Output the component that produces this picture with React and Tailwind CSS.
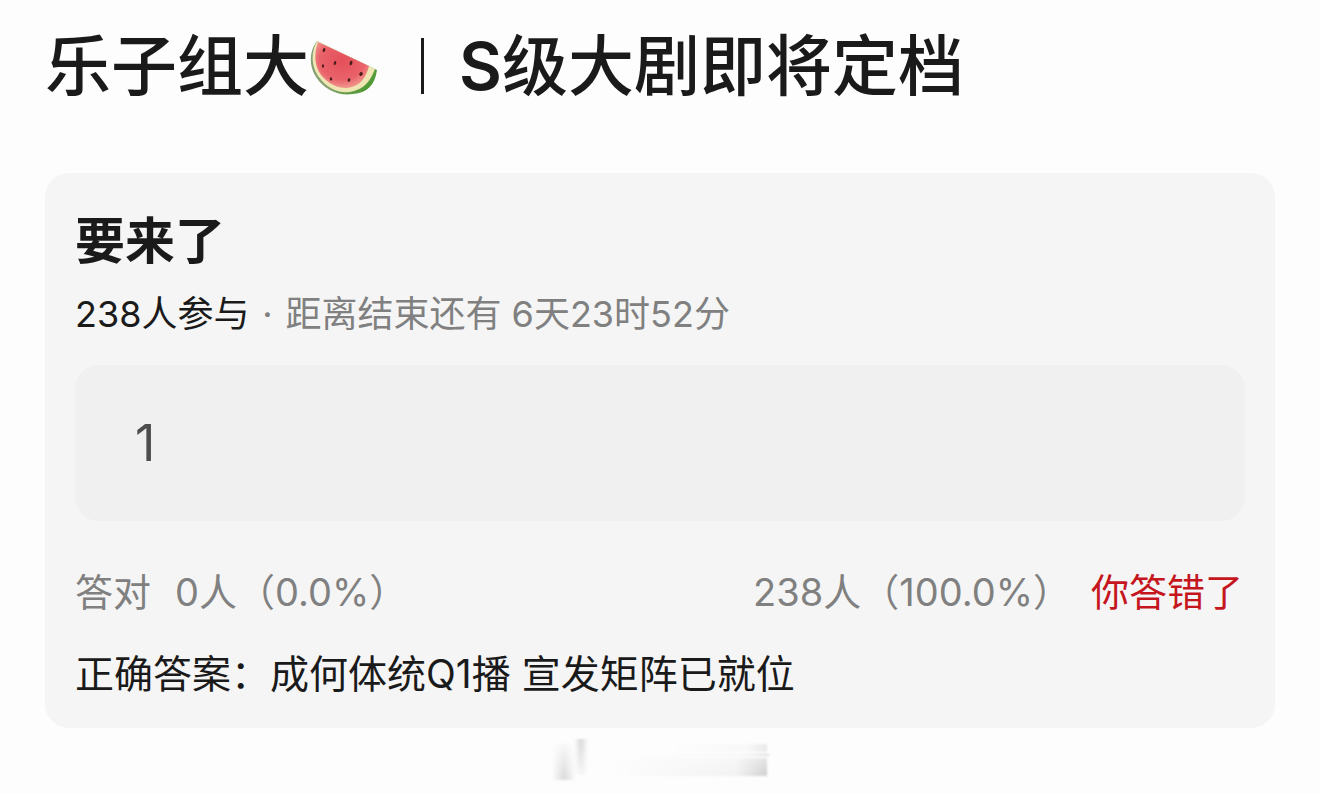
function Watermelon() {
  return (
    <svg viewBox="0 0 70 56" className="h-[56px] w-[70px] shrink-0" role="img" aria-label="西瓜">
      <defs>
        <radialGradient id="flesh" cx="0.5" cy="0.4" r="0.65">
          <stop offset="0" stopColor="#e4505a" />
          <stop offset="0.65" stopColor="#ea626a" />
          <stop offset="1" stopColor="#f2a597" />
        </radialGradient>
        <linearGradient id="rind" x1="0" y1="0" x2="1" y2="0.7">
          <stop offset="0" stopColor="#7f9f7b" />
          <stop offset="0.6" stopColor="#86a26c" />
          <stop offset="1" stopColor="#4d9a32" />
        </linearGradient>
      </defs>
      <path d="M8 1C1 10 -1 25 7 37C16 51 31 56 44 54C58 53 66 45 68 30Z" fill="url(#rind)" />
      <path d="M8 1C2 12 2 25 9 36C19 50 33 55 45 51C55 48 61 42 66 29Z" fill="#efe6b4" />
      <path d="M9 2C5 13 5 25 12 35C21 46 34 50 43 47C51 45 57 38 60 26Z" fill="url(#flesh)" />
      <g fill="#4a1d1d">
        <ellipse cx="15" cy="10" rx="1.3" ry="2" transform="rotate(20 15 10)" />
        <ellipse cx="26" cy="23" rx="1.2" ry="2" transform="rotate(20 26 23)" />
        <ellipse cx="42" cy="23" rx="1.4" ry="2.3" transform="rotate(15 42 23)" />
        <ellipse cx="14" cy="26" rx="1.1" ry="1.7" />
        <ellipse cx="52" cy="34" rx="1.7" ry="2" transform="rotate(30 52 34)" />
        <ellipse cx="22" cy="39" rx="1.2" ry="1.7" transform="rotate(-20 22 39)" />
        <ellipse cx="40" cy="40" rx="1.3" ry="1.9" transform="rotate(20 40 40)" />
      </g>
    </svg>
  );
}

function Smudge() {
  return (
    <svg viewBox="0 0 222 46" className="h-[46px] w-[222px]" aria-hidden="true">
      <defs>
        <linearGradient id="bandA" x1="0" x2="1" y1="0" y2="0">
          <stop offset="0" stopColor="#bbb" stopOpacity="0" />
          <stop offset="0.5" stopColor="#bbb" stopOpacity="0.6" />
          <stop offset="1" stopColor="#bbb" stopOpacity="0" />
        </linearGradient>
        <linearGradient id="fadeUp" x1="0" x2="0" y1="0" y2="1">
          <stop offset="0" stopColor="#fff" stopOpacity="0" />
          <stop offset="1" stopColor="#fff" />
        </linearGradient>
        <linearGradient id="fadeDown" x1="0" x2="0" y1="0" y2="1">
          <stop offset="0" stopColor="#fff" />
          <stop offset="1" stopColor="#fff" stopOpacity="0" />
        </linearGradient>
        <linearGradient id="tail" x1="0" x2="1" y1="0" y2="0">
          <stop offset="0" stopColor="#bbb" stopOpacity="0" />
          <stop offset="0.8" stopColor="#bbb" stopOpacity="0.2" />
          <stop offset="1" stopColor="#aaa" stopOpacity="0.7" />
        </linearGradient>
        <filter id="soft" x="-10%" y="-20%" width="120%" height="140%">
          <feGaussianBlur stdDeviation="0.8" />
        </filter>
        <mask id="maskUp"><rect width="222" height="46" fill="url(#fadeUp)" /></mask>
        <mask id="maskDown"><rect width="222" height="46" fill="url(#fadeDown)" /></mask>
      </defs>
      <g filter="url(#soft)">
        <rect x="3" y="6" width="24" height="36" fill="url(#bandA)" mask="url(#maskUp)" />
        <rect x="25" y="1" width="14" height="36" fill="url(#bandA)" mask="url(#maskDown)" />
        <rect x="60" y="20" width="158" height="18" fill="url(#tail)" mask="url(#maskUp)" />
        <rect x="120" y="6" width="98" height="8" fill="url(#tail)" opacity="0.35" />
        <rect x="90" y="16" width="130" height="2" fill="url(#tail)" opacity="0.6" />
      </g>
    </svg>
  );
}

export default function App() {
  return (
    <main className="min-h-screen bg-[#fdfdfd] px-[45px] pt-[26px] font-['Inter','Noto_Sans_CJK_SC',sans-serif] text-[#1a1a1a]">
      <h1 className="flex h-20 items-center text-[66px] font-medium leading-[80px] whitespace-nowrap">
        <span>乐子组大</span>
        <span className="flex pt-1">
          <Watermelon />
        </span>
        <span className="mr-[35px] ml-[42px] h-14 w-[3px] bg-[#1a1a1a]" />
        <span>
          <span className="font-semibold">S</span>级大剧即将定档
        </span>
      </h1>

      <section className="mt-[67px] rounded-3xl bg-[#f5f5f5] px-[30px] pt-9 pb-[27px]">
        <h2 className="text-[50px] font-bold leading-[64px]">要来了</h2>
        <p className="mt-4 flex items-center text-[36px] leading-[50px] whitespace-pre">
          <span>238人参与</span>
          <span className="w-9 text-center text-[#808080]">·</span>
          <span className="text-[#808080]">距离结束还有 6天23时52分</span>
        </p>
        <input
          aria-label="你的答案"
          defaultValue="1"
          readOnly
          className="mt-[26px] block h-39 w-full rounded-3xl bg-[#f0f0f0] px-[60px] text-[50px] text-[#4d4d4d] outline-none"
        />
        <div className="mt-11 flex items-center justify-between text-[38px] leading-[54px] text-[#808080]">
          <span className="flex gap-6">
            <span>答对</span>
            <span>0人（0.0%）</span>
          </span>
          <span className="flex gap-5 pr-0.5">
            <span>238人（100.0%）</span>
            <span className="text-[#c5161d]">你答错了</span>
          </span>
        </div>
        <p className="mt-7 text-[39px] leading-[54px]">正确答案：成何体统Q1播 宣发矩阵已就位</p>
      </section>

      <div className="mt-[10px] flex justify-center">
        <Smudge />
      </div>
    </main>
  );
}
